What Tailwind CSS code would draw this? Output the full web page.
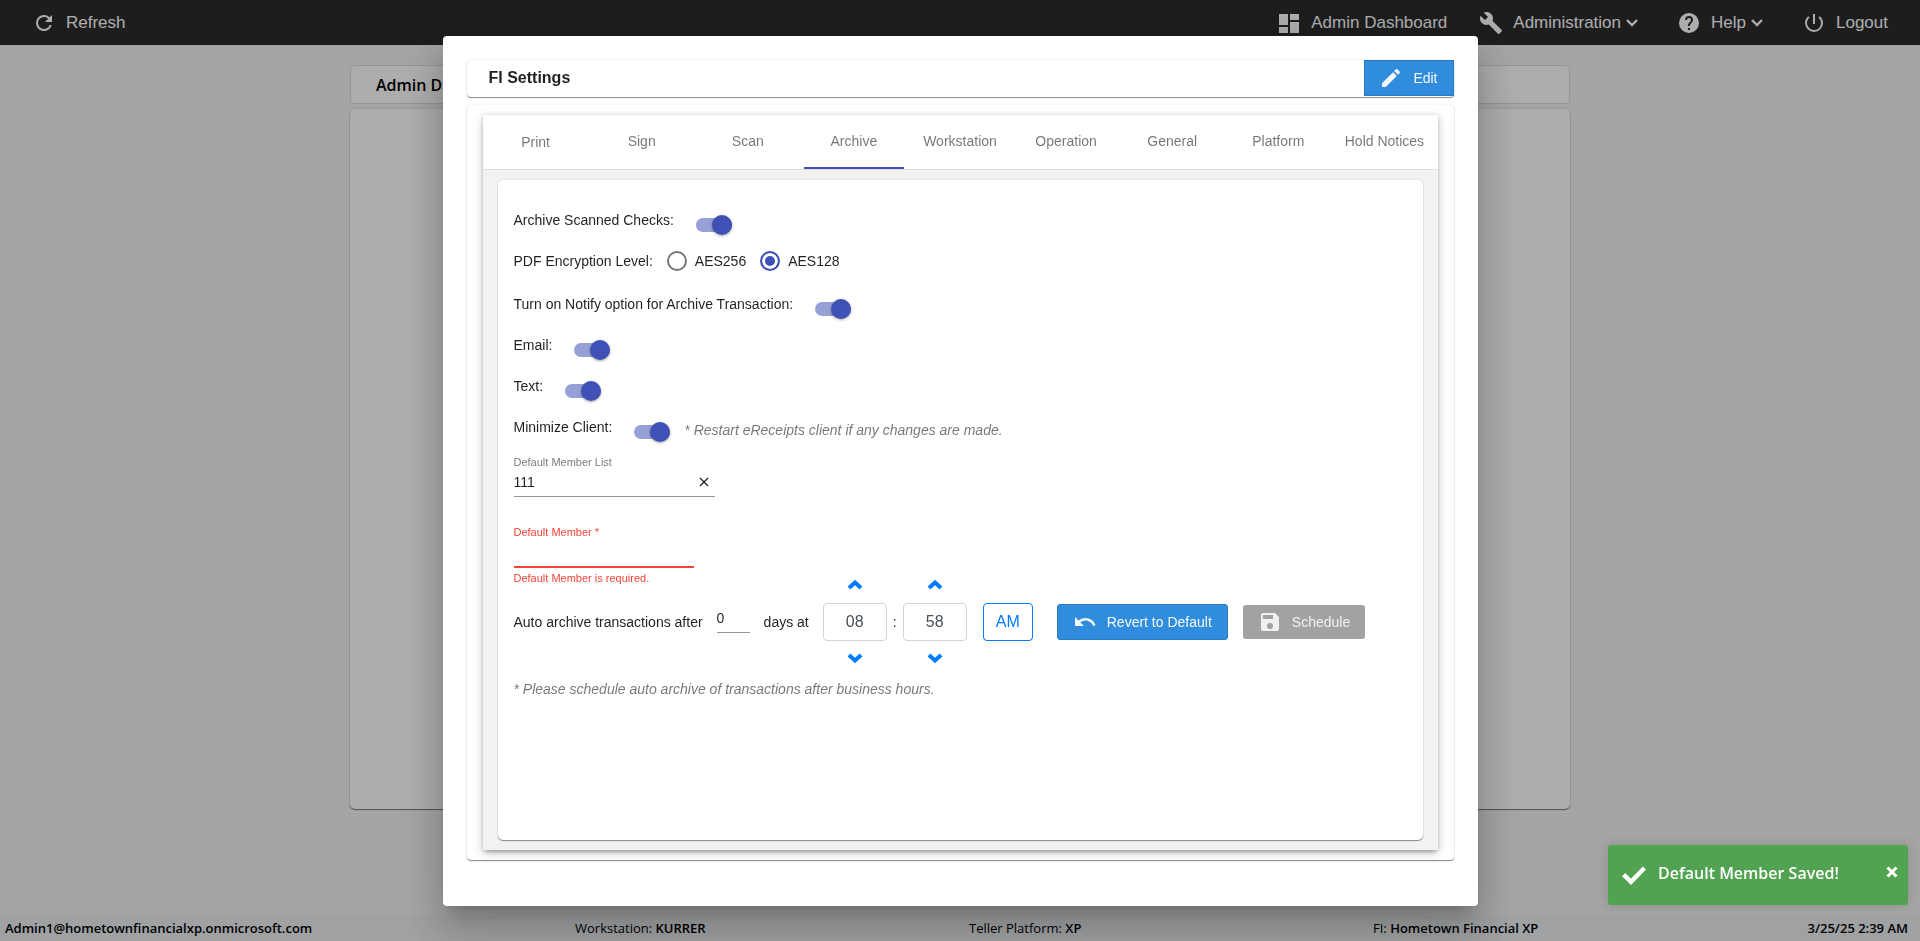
<!DOCTYPE html>
<html lang="en">
<head>
<meta charset="utf-8">
<meta name="viewport" content="width=device-width, initial-scale=1">
<title>FI Settings</title>
<script src="https://cdn.jsdelivr.net/npm/@tailwindcss/browser@4"></script>
</head>
<body class="flex min-h-screen flex-col bg-[#f3f3f3] font-['Liberation_Sans',Arial,sans-serif] text-sm text-black/87">

<!-- Top navigation -->
<header class="flex h-[45px] shrink-0 items-center justify-between bg-[#2b2b2b] pt-px pr-8 pl-8 text-[17px] text-white">
  <a href="#" class="flex items-center gap-[10px]">
    <svg class="size-6" viewBox="0 0 24 24" fill="currentColor"><path d="M17.65 6.35A7.96 7.96 0 0 0 12 4a8 8 0 1 0 7.73 10h-2.08A6 6 0 1 1 12 6c1.66 0 3.14.69 4.22 1.78L13 11h7V4z"/></svg>
    Refresh
  </a>
  <nav class="flex items-center">
    <a href="#" class="mr-8 flex items-center gap-[10px]">
      <svg class="size-6" viewBox="0 0 24 24" fill="currentColor"><path d="M2 3h9v11H2zM13 3h9v6h-9zM13 11h9v11h-9zM2 16h9v6H2z"/></svg>
      Admin Dashboard
    </a>
    <button type="button" class="mr-[38px] flex items-center">
      <svg class="mr-[10px] size-6" viewBox="0 0 24 24" fill="currentColor"><path d="M22.7 19l-9.1-9.1c.9-2.3.4-5-1.5-6.9-2-2-5-2.4-7.4-1.3L9 6 6 9 1.600 4.700C.4 7.100.9 10.100 2.900 12.100c1.900 1.900 4.600 2.400 6.900 1.500l9.100 9.100c.4.4 1 .4 1.400 0l2.300-2.300c.5-.4.5-1.100.100-1.400z"/></svg>
      Administration
      <svg class="ml-1 h-4 w-[14px]" viewBox="0 0 14 16" fill="none" stroke="currentColor" stroke-width="2.400"><path d="M2 5l5 5 5-5"/></svg>
    </button>
    <button type="button" class="mr-[38px] flex items-center">
      <svg class="mr-[10px] size-6" viewBox="0 0 24 24" fill="currentColor"><path d="M12 2a10 10 0 1 0 0 20 10 10 0 0 0 0-20zm1 17h-2v-2h2zm2.070-7.750-.9.920C13.450 12.900 13 13.500 13 15h-2v-.5c0-1.100.45-2.100 1.170-2.830l1.240-1.260c.37-.36.59-.86.59-1.410a2 2 0 1 0-4 0H8a4 4 0 1 1 8 0c0 .88-.36 1.680-.93 2.250z"/></svg>
      Help
      <svg class="ml-1 h-4 w-[14px]" viewBox="0 0 14 16" fill="none" stroke="currentColor" stroke-width="2.400"><path d="M2 5l5 5 5-5"/></svg>
    </button>
    <a href="#" class="flex items-center gap-[10px]">
      <svg class="size-6" viewBox="0 0 24 24" fill="currentColor"><path d="M13 3h-2v10h2zm4.830 2.170-1.420 1.420A6.920 6.920 0 0 1 19 12a7 7 0 1 1-11.420-5.420L6.170 5.170A8.930 8.930 0 0 0 3 12a9 9 0 1 0 18 0c0-2.740-1.230-5.180-3.170-6.830z"/></svg>
      Logout
    </a>
  </nav>
</header>

<!-- Page behind the dialog -->
<main class="mx-auto flex w-full max-w-[1220px] grow flex-col gap-[5px] pt-5 font-['Open_Sans','Noto_Sans',sans-serif]">
  <h1 class="flex h-[39px] items-center rounded-[4px] border border-[#dcdcdc] bg-white pl-[25px] text-base font-semibold text-black">Admin Dashboard</h1>
  <section class="min-h-[700px] rounded-[5px] bg-white shadow-[0_1px_1px_#777,0_0_2px_rgba(0,0,0,0.2)]"></section>
</main>

<footer class="grid h-[26px] shrink-0 grid-cols-[570fr_394fr_404fr_300fr_235fr] items-center bg-[#eaedf0] pr-3 pl-[5px] font-['Open_Sans','Noto_Sans',sans-serif] text-[13px] text-black">
  <b class="font-semibold">Admin1@hometownfinancialxp.onmicrosoft.com</b>
  <span>Workstation: <b class="font-semibold">KURRER</b></span>
  <span>Teller Platform: <b class="font-semibold">XP</b></span>
  <span>FI: <b class="font-semibold">Hometown Financial XP</b></span>
  <b class="text-right font-semibold">3/25/25 2:39 AM</b>
</footer>

<!-- Dialog -->
<div class="fixed inset-0 flex justify-center bg-black/32 pt-9 pb-[35px]">
  <div role="dialog" aria-modal="true" aria-labelledby="dlg-title" class="flex w-full max-w-[1035px] flex-col rounded-[4px] bg-white px-6 pt-6 pb-[46px] shadow-[0_11px_15px_-7px_rgba(0,0,0,0.2),0_24px_38px_3px_rgba(0,0,0,0.14),0_9px_46px_8px_rgba(0,0,0,0.12)]">

    <div class="flex h-[37px] shrink-0 items-start justify-between rounded-[4px] shadow-[0_1px_1px_#888,0_0_2px_rgba(0,0,0,0.12)]">
      <h2 id="dlg-title" class="pl-[22px] text-base leading-9 font-bold">FI Settings</h2>
      <button type="button" class="flex h-9 items-center gap-[10px] border border-[#2a7cc2] bg-[#308ddd] pr-[15px] pl-[14px] text-white/95">
        <svg class="size-6" viewBox="0 0 24 24" fill="currentColor"><path d="M3 17.250V21h3.750L17.810 9.940l-3.750-3.750zM20.710 7.040a1 1 0 0 0 0-1.410l-2.340-2.340a1 1 0 0 0-1.410 0l-1.830 1.830 3.750 3.750z"/></svg>
        Edit
      </button>
    </div>

    <div class="mt-2 flex grow flex-col rounded-[4px] px-4 pt-[10px] pb-[10px] shadow-[0_1px_1px_#888,0_0_2px_rgba(0,0,0,0.12)]">
      <div class="flex grow flex-col bg-[#f2f2f2] shadow-[0_5px_5px_-3px_rgba(0,0,0,0.2),0_3px_10px_1px_rgba(0,0,0,0.14),0_1px_4px_rgba(0,0,0,0.2)]">

        <nav role="tablist" class="grid h-[55px] grid-cols-9 border-b border-[#dedede] bg-white text-black/54">
          <button type="button" role="tab" class="mx-[3px] pb-3 pt-3">Print</button>
          <button type="button" role="tab" class="mx-[3px] pb-3 pt-[10px]">Sign</button>
          <button type="button" role="tab" class="mx-[3px] pb-3 pt-[10px]">Scan</button>
          <button type="button" role="tab" aria-selected="true" class="mx-[3px] border-b-2 border-[#3f51b5] pt-[10px] pb-[10px]">Archive</button>
          <button type="button" role="tab" class="mx-[3px] pb-3 pt-[10px]">Workstation</button>
          <button type="button" role="tab" class="mx-[3px] pb-3 pt-[10px]">Operation</button>
          <button type="button" role="tab" class="mx-[3px] pb-3 pt-[10px]">General</button>
          <button type="button" role="tab" class="mx-[3px] pb-3 pt-[10px]">Platform</button>
          <button type="button" role="tab" class="mx-[3px] pb-3 pt-[10px] whitespace-nowrap">Hold Notices</button>
        </nav>

        <form class="mx-[15px] mt-[10px] mb-[10px] grow rounded-[5px] bg-white px-4 pt-[30px] shadow-[0_1px_1px_#888,0_0_2px_rgba(0,0,0,0.12)]">
          <div class="flex flex-col gap-[19px]">
            <div class="flex items-start gap-[22px]">
              <label for="scanned">Archive Scanned Checks:</label>
              <input id="scanned" type="checkbox" role="switch" checked class="relative mt-2 h-[14px] w-9 appearance-none rounded-full bg-[#3f51b5]/54 before:absolute before:-top-[3px] before:right-0 before:size-5 before:rounded-full before:bg-[#3f51b5] before:shadow-[0_1px_3px_rgba(0,0,0,0.35)]">
            </div>
            <fieldset class="flex items-start pb-1">
              <legend class="float-left mr-[14px]">PDF Encryption Level:</legend>
              <input id="aes256" name="aes" type="radio" class="mr-2 size-5 appearance-none rounded-full border-2 border-black/54">
              <label for="aes256" class="mr-[14px]">AES256</label>
              <input id="aes128" name="aes" type="radio" checked class="mr-2 size-5 appearance-none rounded-full border-2 border-[#3f51b5] bg-[#3f51b5] shadow-[inset_0_0_0_3px_#fff]">
              <label for="aes128">AES128</label>
            </fieldset>
            <div class="flex items-start gap-[22px]">
              <label for="notify">Turn on Notify option for Archive Transaction:</label>
              <input id="notify" type="checkbox" role="switch" checked class="relative mt-2 h-[14px] w-9 appearance-none rounded-full bg-[#3f51b5]/54 before:absolute before:-top-[3px] before:right-0 before:size-5 before:rounded-full before:bg-[#3f51b5] before:shadow-[0_1px_3px_rgba(0,0,0,0.35)]">
            </div>
            <div class="flex items-start gap-[22px]">
              <label for="email">Email:</label>
              <input id="email" type="checkbox" role="switch" checked class="relative mt-2 h-[14px] w-9 appearance-none rounded-full bg-[#3f51b5]/54 before:absolute before:-top-[3px] before:right-0 before:size-5 before:rounded-full before:bg-[#3f51b5] before:shadow-[0_1px_3px_rgba(0,0,0,0.35)]">
            </div>
            <div class="flex items-start gap-[22px]">
              <label for="text">Text:</label>
              <input id="text" type="checkbox" role="switch" checked class="relative mt-2 h-[14px] w-9 appearance-none rounded-full bg-[#3f51b5]/54 before:absolute before:-top-[3px] before:right-0 before:size-5 before:rounded-full before:bg-[#3f51b5] before:shadow-[0_1px_3px_rgba(0,0,0,0.35)]">
            </div>
            <div class="flex h-[22px] items-start">
              <label for="minimize" class="mr-[22px]">Minimize Client:</label>
              <input id="minimize" type="checkbox" role="switch" checked class="relative mt-2 mr-[14px] h-[14px] w-9 appearance-none rounded-full bg-[#3f51b5]/54 before:absolute before:-top-[3px] before:right-0 before:size-5 before:rounded-full before:bg-[#3f51b5] before:shadow-[0_1px_3px_rgba(0,0,0,0.35)]">
              <em class="mt-[3px] text-black/54">* Restart eReceipts client if any changes are made.</em>
            </div>
          </div>

          <div class="mt-[15px] w-[201px]">
            <label for="memberlist" class="block text-[11px] leading-4 text-black/54">Default Member List</label>
            <div class="flex h-[27px] items-center border-b border-black/42 pr-1 pb-[2px]">
              <input id="memberlist" type="text" value="111" class="min-w-0 grow outline-none">
              <button type="button" aria-label="Clear" class="flex size-[14px] items-center justify-center">
                <svg class="size-[14px]" viewBox="0 0 14 14" fill="none" stroke="currentColor" stroke-width="1.300"><path d="M3 3l8 8M11 3l-8 8"/></svg>
              </button>
            </div>
          </div>

          <div class="mt-[27px] w-[180px] text-[11px] leading-4 text-[#f44336]">
            <label for="member" class="block">Default Member *</label>
            <input id="member" type="text" aria-invalid="true" aria-describedby="member-error" class="block h-7 w-full border-b-2 border-[#f44336] text-sm outline-none">
            <p id="member-error" class="mt-0.5">Default Member is required.</p>
          </div>

          <div class="-mt-[18px] flex items-center">
            <label for="days" class="mr-[14px]">Auto archive transactions after</label>
            <input id="days" type="text" value="0" class="mr-[14px] mb-[3px] h-[25px] w-[33px] border-b border-black/42 pb-1 outline-none">
            <span class="mr-[14px]">days at</span>
            <div class="flex w-16 flex-col">
              <button type="button" aria-label="Hour up" class="flex h-[35px] items-center justify-center pb-[2px] text-[#007bff]"><svg class="h-[10px] w-4" viewBox="0 0 16 10" fill="none" stroke="currentColor" stroke-width="4"><path d="M2 8l6-5.500L14 8"/></svg></button>
              <input type="text" aria-label="Hour" value="08" class="h-[38px] w-full rounded-[4px] border border-[#ced4da] text-center text-base text-[#495057]">
              <button type="button" aria-label="Hour down" class="flex h-[35px] items-center justify-center pb-[2px] text-[#007bff]"><svg class="h-[10px] w-4" viewBox="0 0 16 10" fill="none" stroke="currentColor" stroke-width="4"><path d="M2 2l6 5.500L14 2"/></svg></button>
            </div>
            <span class="w-4 text-center">:</span>
            <div class="flex w-16 flex-col">
              <button type="button" aria-label="Minute up" class="flex h-[35px] items-center justify-center pb-[2px] text-[#007bff]"><svg class="h-[10px] w-4" viewBox="0 0 16 10" fill="none" stroke="currentColor" stroke-width="4"><path d="M2 8l6-5.500L14 8"/></svg></button>
              <input type="text" aria-label="Minute" value="58" class="h-[38px] w-full rounded-[4px] border border-[#ced4da] text-center text-base text-[#495057]">
              <button type="button" aria-label="Minute down" class="flex h-[35px] items-center justify-center pb-[2px] text-[#007bff]"><svg class="h-[10px] w-4" viewBox="0 0 16 10" fill="none" stroke="currentColor" stroke-width="4"><path d="M2 2l6 5.500L14 2"/></svg></button>
            </div>
            <button type="button" class="ml-4 h-[38px] w-[50px] rounded-[4px] border border-[#007bff] text-base text-[#007bff]">AM</button>
            <button type="button" class="ml-6 flex h-9 items-center gap-[10px] rounded-[3px] border border-[#2a7cc2] bg-[#308ddd] px-[15px] whitespace-nowrap text-white/95">
              <svg class="size-6" viewBox="0 0 24 24" fill="currentColor"><path d="M12.500 8c-2.650 0-5.050.99-6.900 2.600L2 7v9h9l-3.620-3.620A7.980 7.980 0 0 1 12.500 10.500c3.540 0 6.550 2.310 7.600 5.500l2.370-.78C21.080 11.030 17.150 8 12.500 8z"/></svg>
              Revert to Default
            </button>
            <button type="button" disabled class="ml-[15px] flex h-[34px] items-center gap-[10px] rounded-[3px] bg-[#a3a2a1] px-[15px] text-white/85">
              <svg class="size-6" viewBox="0 0 24 24" fill="currentColor"><path d="M17 3H5a2 2 0 0 0-2 2v14a2 2 0 0 0 2 2h14a2 2 0 0 0 2-2V7zm-5 16a3 3 0 1 1 0-6 3 3 0 0 1 0 6zm3-10H5V5h10z"/></svg>
              Schedule
            </button>
          </div>

          <p class="mt-[3px] text-black/54 italic">* Please schedule auto archive of transactions after business hours.</p>
        </form>
      </div>
    </div>
  </div>
</div>

<!-- Toast -->
<div role="status" class="fixed right-3 bottom-9 flex h-[60px] w-[300px] items-start rounded-[3px] bg-[#51a351] pt-[17px] pr-[10px] pl-[14px] font-['Open_Sans','Noto_Sans',sans-serif] text-white shadow-[0_0_12px_rgba(0,0,0,0.15)]">
  <svg class="mt-[3px] mr-3 h-5 w-6 shrink-0" viewBox="0 0 24 20" fill="none" stroke="currentColor" stroke-width="4.500"><path d="M1.600 9.600l7.400 7.200L22.400 3"/></svg>
  <strong class="grow text-base leading-[22px] font-semibold whitespace-nowrap">Default Member Saved!</strong>
  <button type="button" aria-label="Close" class="mt-1 flex size-3 items-center justify-center"><svg class="size-3" viewBox="0 0 12 12" fill="none" stroke="currentColor" stroke-width="3"><path d="M1.500 1.500l9 9M10.500 1.500l-9 9"/></svg></button>
</div>
</body>
</html>
